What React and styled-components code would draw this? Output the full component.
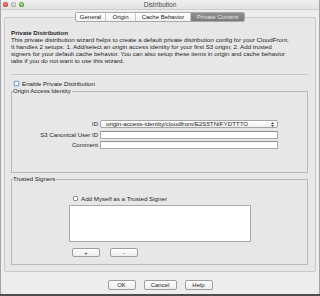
import React from 'react';
import styled, { createGlobalStyle, css } from 'styled-components';

const GlobalStyle = createGlobalStyle`
  html, body {
    margin: 0;
    padding: 0;
    background: #4e4e4e;
  }
  body {
    font-family: "Liberation Sans", Arial, sans-serif;
  }
`;

const Window = styled.div`
  width: 320px;
  height: 294px;
  box-sizing: border-box;
  background: #ededed;
  border-left: 1px solid #a4a4a4;
  border-right: 1px solid #a4a4a4;
  display: flex;
  flex-direction: column;
  font-size: 6px;
  color: #1e1e1e;
`;

const TitleBar = styled.div`
  height: 10px;
  box-sizing: border-box;
  display: grid;
  grid-template-columns: 1fr auto 1fr;
  align-items: center;
  padding: 0 2px;
  background: linear-gradient(#f0f0f0, #e2e2e2);
  border-bottom: 1px solid #cdcdcd;
`;

const Lights = styled.div`
  display: flex;
  gap: 3px;
`;

const Light = styled.span`
  width: 5px;
  height: 5px;
  border-radius: 50%;
  background: ${(p) => p.color};
  box-shadow: inset 0 0 0 0.5px rgba(0, 0, 0, 0.25);
`;

const Title = styled.div`
  font-size: 6.5px;
  color: #4a4a4a;
  line-height: 9px;
`;

const Body = styled.div`
  display: flex;
  flex-direction: column;
  padding: 2px 3px 0 3px;
`;

const Tabs = styled.div`
  align-self: center;
  display: flex;
  height: 10px;
  box-sizing: border-box;
  margin-bottom: -5px;
  position: relative;
  z-index: 1;
  border: 1px solid #a9a9a9;
  border-radius: 2px;
  background: linear-gradient(#ffffff, #f1f1f1);
  overflow: hidden;
`;

const Tab = styled.div`
  display: flex;
  align-items: center;
  justify-content: center;
  width: ${(p) => p.w}px;
  font-size: 6px;
  color: #222;
  & + & {
    border-left: 1px solid #c8c8c8;
  }
  ${(p) =>
    p.active &&
    css`
      background: linear-gradient(#8e8e8e, #7a7a7a);
      color: #e6e6e6;
    `}
`;

const Panel = styled.div`
  height: 255px;
  box-sizing: border-box;
  border: 1px solid #c9c9c9;
  border-radius: 2px;
  background: #e7e7e7;
  padding: 11px 7px 0 6px;
  display: flex;
  flex-direction: column;
`;

const Heading = styled.div`
  font-weight: bold;
  line-height: 7px;
  font-size: 6.2px;
`;

const Intro = styled.div`
  line-height: 7px;
  font-size: 6.2px;
  white-space: nowrap;
  span {
    display: block;
  }
`;

const Separator = styled.div`
  margin-top: 10px;
  border-top: 1px solid #c6c6c6;
`;

const CheckRow = styled.label`
  display: flex;
  align-items: center;
  gap: 3px;
  height: 8px;
  margin-top: ${(p) => p.top || 0}px;
  padding-left: ${(p) => p.indent || 0}px;
  font-size: 6.2px;
`;

const Box = styled.span`
  width: 5px;
  height: 5px;
  box-sizing: border-box;
  background: #fff;
  border: 1px solid ${(p) => (p.focus ? '#7ea6d6' : '#8e8e8e')};
  border-radius: 1px;
  box-shadow: ${(p) => (p.focus ? '0 0 0 0.5px #a9c6ea' : 'none')};
`;

const Group = styled.fieldset`
  margin: ${(p) => p.top || 0}px 0 0 0;
  padding: 0;
  border: 1px solid #b9b9b9;
  min-width: 0;
  display: flex;
  flex-direction: column;
  height: ${(p) => p.h}px;
  box-sizing: border-box;
`;

const Legend = styled.legend`
  margin-left: 1px;
  padding: 0 1px 0 0;
  font-size: 6px;
  line-height: 7px;
  color: #222;
`;

const Form = styled.div`
  display: grid;
  grid-template-columns: 86px 178px;
  column-gap: 2px;
  row-gap: 2.5px;
  grid-auto-rows: 8px;
  margin-top: 25px;
`;

const FieldLabel = styled.div`
  text-align: right;
  line-height: 8px;
  font-size: 6px;
`;

const Input = styled.div`
  box-sizing: border-box;
  background: #fff;
  border: 1px solid #a9a9a9;
  border-top-color: #8f8f8f;
`;

const Select = styled.div`
  box-sizing: border-box;
  display: flex;
  align-items: center;
  justify-content: space-between;
  padding: 0 3px 0 5px;
  background: linear-gradient(#ffffff, #f0f0f0);
  border: 1px solid #a5a5a5;
  border-radius: 2px;
  font-size: 6.2px;
  line-height: 6px;
`;

const SignerBody = styled.div`
  display: flex;
  flex-direction: column;
  padding-left: 57px;
  margin-top: 11px;
`;

const List = styled.div`
  width: 182px;
  height: 37px;
  box-sizing: border-box;
  margin-top: 3px;
  background: #fff;
  border: 1px solid #a9a9a9;
`;

const SmallButtons = styled.div`
  display: flex;
  gap: 10px;
  margin: 6px 0 0 3px;
`;

const Button = styled.div`
  width: ${(p) => p.w}px;
  height: ${(p) => p.h || 9}px;
  box-sizing: border-box;
  display: flex;
  align-items: center;
  justify-content: center;
  background: linear-gradient(#ffffff, #ececec);
  border: 1px solid #9d9d9d;
  border-radius: 2px;
  font-size: ${(p) => p.fs || 6}px;
  color: #2a2a2a;
`;

const Footer = styled.div`
  display: flex;
  justify-content: center;
  gap: 8px;
  margin-top: 8px;
`;

function Arrows() {
  return (
    <svg width="3" height="5" viewBox="0 0 3 5">
      <path d="M0 2 L1.5 0.3 L3 2 Z" fill="#333" />
      <path d="M0 3 L1.5 4.7 L3 3 Z" fill="#333" />
    </svg>
  );
}

export default function App() {
  return (
    <>
      <GlobalStyle />
      <Window>
        <TitleBar>
          <Lights>
            <Light color="radial-gradient(circle at 50% 35%, #f98a83, #d8372f)" />
            <Light color="radial-gradient(circle at 50% 35%, #e4e4e4, #b9b9b9)" />
            <Light color="radial-gradient(circle at 50% 35%, #9be089, #4aa83a)" />
          </Lights>
          <Title>Distribution</Title>
          <span />
        </TitleBar>
        <Body>
          <Tabs>
            <Tab w={29}>General</Tab>
            <Tab w={29}>Origin</Tab>
            <Tab w={54}>Cache Behavior</Tab>
            <Tab w={53} active>
              Private Content
            </Tab>
          </Tabs>
          <Panel>
            <Heading>Private Distribution</Heading>
            <Intro>
              <span>This private distribution wizard helps to create a default private distribution config for your CloudFront.</span>
              <span>It handles 2 setups: 1. Add/select an origin access identity for your first S3 origin; 2. Add trusted</span>
              <span>signers for your default cache behavior. You can also setup these items in origin and cache behavior</span>
              <span>tabs if you do not want to use this wizard.</span>
            </Intro>
            <Separator />
            <CheckRow top={4} indent={3}>
              <Box focus />
              Enable Private Distribution
            </CheckRow>
            <Group top={1} h={85}>
              <Legend>Origin Access Identity</Legend>
              <Form>
                <FieldLabel>ID</FieldLabel>
                <Select>
                  origin-access-identity/cloudfront/E2S5TNIFYDTT7O
                  <Arrows />
                </Select>
                <FieldLabel>S3 Canonical User ID</FieldLabel>
                <Input />
                <FieldLabel>Comment</FieldLabel>
                <Input />
              </Form>
            </Group>
            <Group top={3} h={89}>
              <Legend>Trusted Signers</Legend>
              <SignerBody>
                <CheckRow indent={4}>
                  <Box />
                  Add Myself as a Trusted Signer
                </CheckRow>
                <List />
                <SmallButtons>
                  <Button w={28}>+</Button>
                  <Button w={28}>-</Button>
                </SmallButtons>
              </SignerBody>
            </Group>
          </Panel>
          <Footer>
            <Button w={28} h={10}>OK</Button>
            <Button w={33} h={10}>Cancel</Button>
            <Button w={28} h={10}>Help</Button>
          </Footer>
        </Body>
      </Window>
    </>
  );
}
